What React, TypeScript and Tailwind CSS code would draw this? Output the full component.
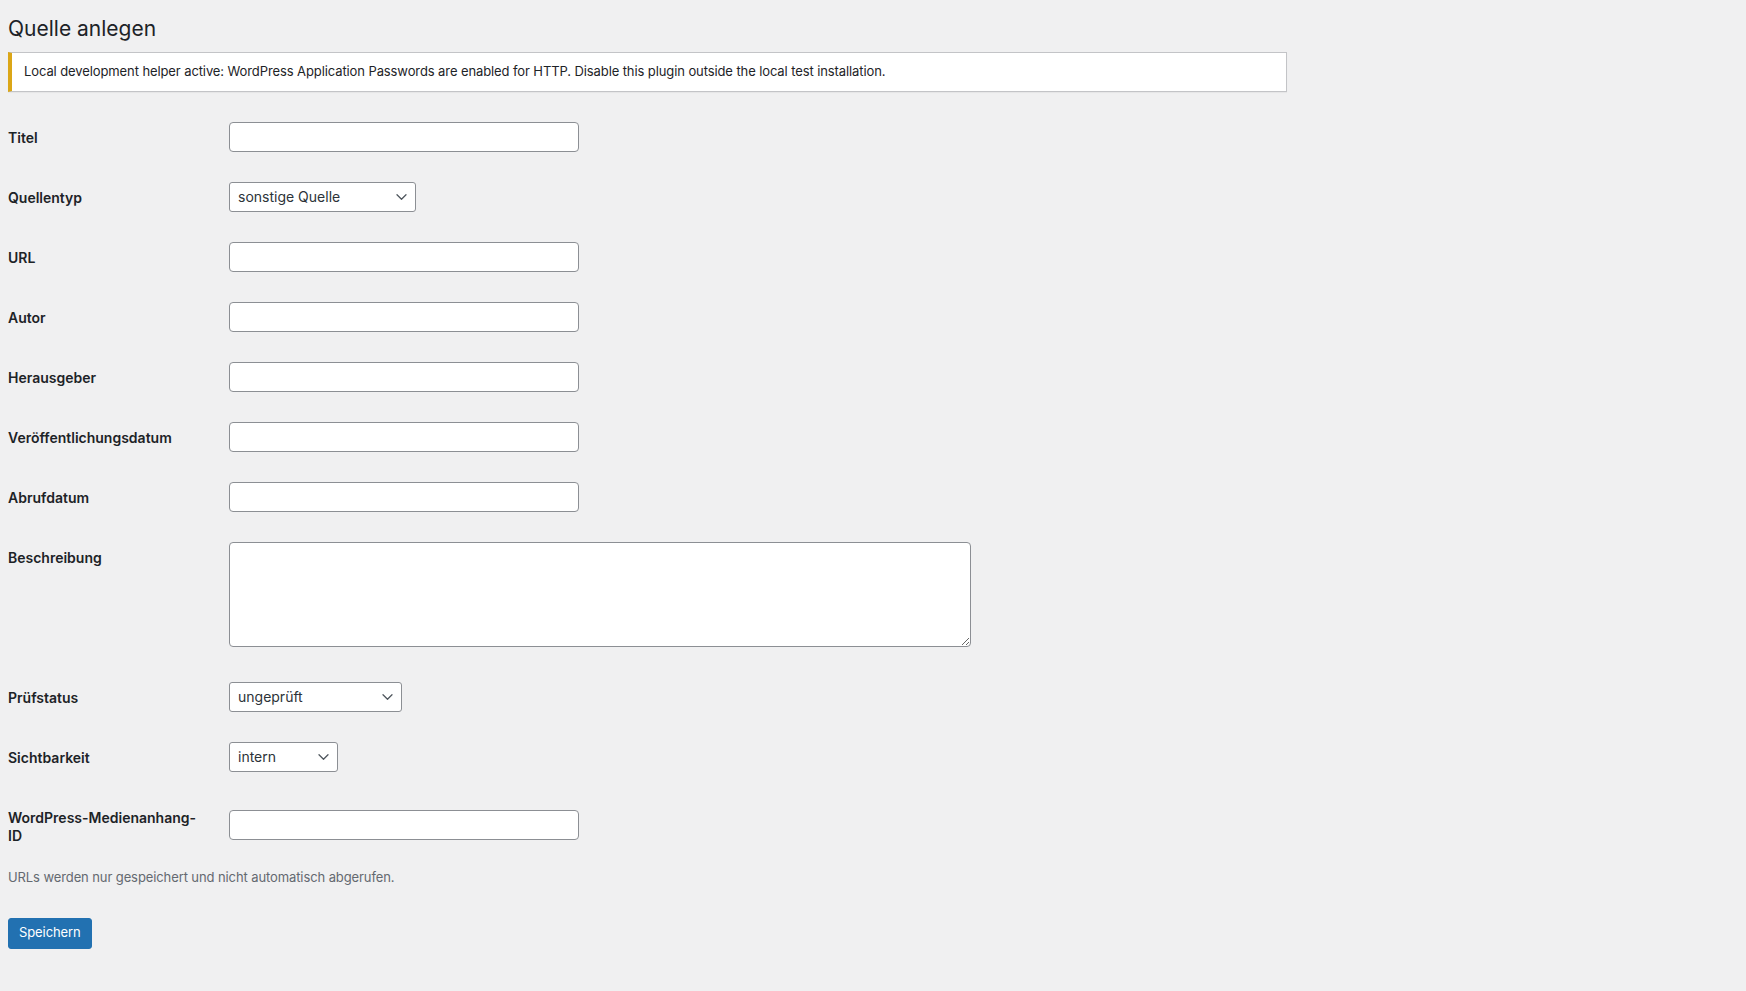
import React, { useState } from 'react';

const font = 'font-["Inter","Liberation_Sans",sans-serif]';

const Chevron = () => (
  <svg
    className="pointer-events-none absolute right-[9px] top-1/2 -translate-y-1/2"
    width="11"
    height="7"
    viewBox="0 0 11 7"
    fill="none"
    stroke="#50575e"
    strokeWidth="1.3"
    strokeLinecap="round"
    strokeLinejoin="round"
  >
    <path d="M1 1.2l4.5 4.5L10 1.2" />
  </svg>
);

interface RowProps {
  label: React.ReactNode;
  children: React.ReactNode;
}

const Row: React.FC<RowProps> = ({ label, children }) => (
  <div className="flex">
    <div className="w-[211px] shrink-0 pt-[22px] pb-[18px] pr-[10px] text-[14px] font-semibold leading-[1.3] text-[#1d2327]">
      {label}
    </div>
    <div className="flex items-center px-[10px] py-[15px]">{children}</div>
  </div>
);

const TextInput = () => (
  <input
    type="text"
    className="h-[30px] w-[350px] rounded-[4px] border border-[#8c8f94] bg-white px-2 text-[14px] text-[#2c3338] outline-none"
  />
);

interface SelectProps {
  width: string;
  value: string;
  options: string[];
}

const Select: React.FC<SelectProps> = ({ width, value, options }) => {
  const [v, setV] = useState(value);
  return (
    <div className={`relative ${width}`}>
      <select
        value={v}
        onChange={(e) => setV(e.target.value)}
        className="h-[30px] w-full appearance-none rounded-[3px] border border-[#8c8f94] bg-white pl-2 pr-6 text-[14px] text-[#2c3338] outline-none"
      >
        {options.map((o) => (
          <option key={o}>{o}</option>
        ))}
      </select>
      <Chevron />
    </div>
  );
};

export default function App() {
  return (
    <div className={`min-h-screen bg-[#f0f0f1] ${font} text-[#1d2327]`}>
      <div className="pl-2 pt-[6px]">
        <h1 className="pt-[9px] pb-[4px] text-[21px] font-normal leading-[1.3]">Quelle anlegen</h1>

        {/* Notice */}
        <div className="mt-[6px] mb-[15px] w-[1279px] border border-l-4 border-[#c3c4c7] border-l-[#dba617] bg-white px-3 py-px shadow-[0_1px_1px_rgba(0,0,0,0.04)]">
          <p className="my-[8px] text-[13px] leading-[1.5] tracking-[-0.1px]">
            Local development helper active: WordPress Application Passwords are enabled for HTTP. Disable this plugin outside the local test installation.
          </p>
        </div>

        {/* Form table */}
        <div className="flex flex-col">
          <Row label="Titel">
            <TextInput />
          </Row>
          <Row label="Quellentyp">
            <Select
              width="w-[187px]"
              value="sonstige Quelle"
              options={['Buch', 'Zeitschriftenartikel', 'Webseite', 'sonstige Quelle']}
            />
          </Row>
          <Row label="URL">
            <TextInput />
          </Row>
          <Row label="Autor">
            <TextInput />
          </Row>
          <Row label="Herausgeber">
            <TextInput />
          </Row>
          <Row label="Veröffentlichungsdatum">
            <TextInput />
          </Row>
          <Row label="Abrufdatum">
            <TextInput />
          </Row>
          <div className="flex">
            <div className="w-[211px] shrink-0 pt-[22px] pb-[18px] pr-[10px] text-[14px] font-semibold leading-[1.3]">
              Beschreibung
            </div>
            <div className="px-[10px] pt-[15px] pb-[20px]">
              <textarea className="block h-[105px] w-[742px] resize rounded-[4px] border border-[#8c8f94] bg-white px-2 py-[2px] text-[14px] outline-none" />
            </div>
          </div>
          <Row label="Prüfstatus">
            <Select width="w-[173px]" value="ungeprüft" options={['ungeprüft', 'geprüft', 'abgelehnt']} />
          </Row>
          <Row label="Sichtbarkeit">
            <Select width="w-[109px]" value="intern" options={['intern', 'öffentlich']} />
          </Row>
          <Row label={<>WordPress-Medienanhang-<br />ID</>}>
            <TextInput />
          </Row>
        </div>

        <p className="mt-[5px] text-[13px] leading-[1.5] tracking-[-0.1px] text-[#646970]">
          URLs werden nur gespeichert und nicht automatisch abgerufen.
        </p>

        <div className="pt-[30px]">
          <button className="h-[31px] rounded-[3px] border border-[#2271b1] bg-[#2271b1] px-[10px] text-[13px] tracking-[-0.1px] text-white">
            Speichern
          </button>
        </div>
      </div>
    </div>
  );
}
